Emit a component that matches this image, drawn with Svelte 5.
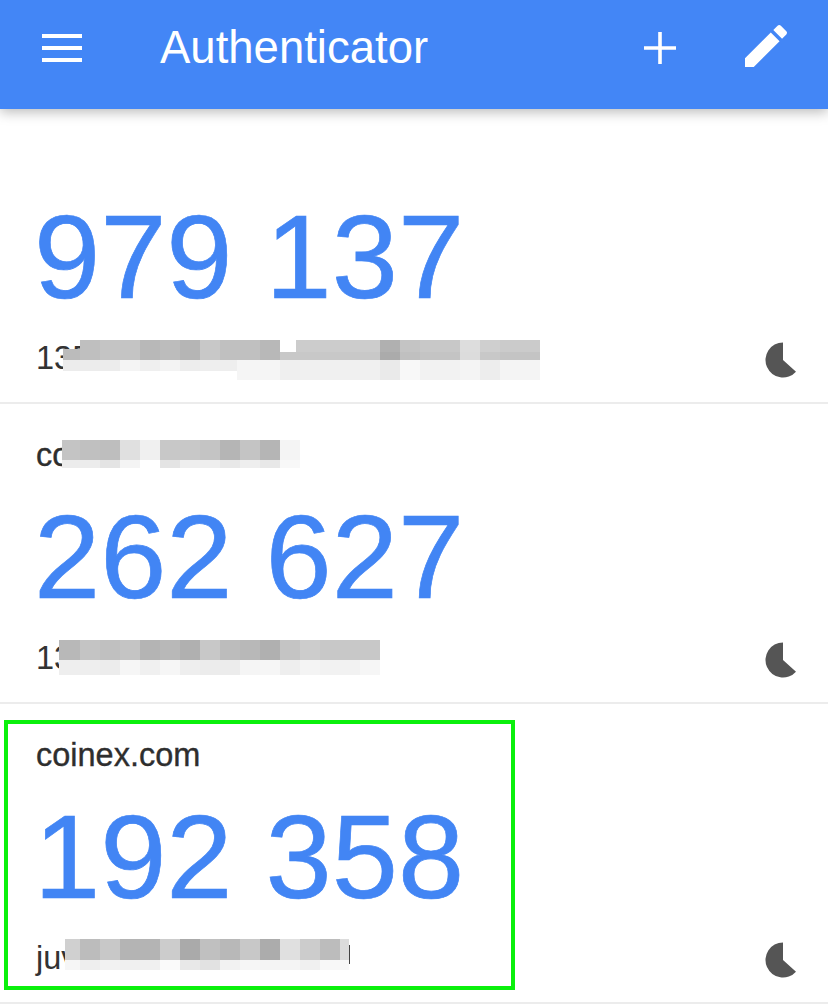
<script>
  const accounts = [
    { issuer: "", code: "979 137", label: "135" },
    { issuer: "co", code: "262 627", label: "13" },
    { issuer: "coinex.com", code: "192 358", label: "juv" }
  ];

  // blurred-out strips over the private text: x, y, height, then [width, grey] cells
  const even = (start, list) => list.map((g, i) => [i === 0 ? start : 20, g]);
  const strips = [
    { x: 63, y: 349, h: 11, cells: [[17, 0xbb]] },
    { x: 80, y: 340, h: 20, cells: even(20, [0xbf, 0xc4, 0xc4, 0xb8, 0xbc, 0xb5, 0xc8, 0xc0, 0xc0, 0xb8]) },
    { x: 296, y: 340, h: 12, cells: [[84, 0xcc], [20, 0xb0], [20, 0xc4], [40, 0xc8], [20, 0xdd], [20, 0xcf], [40, 0xcb]] },
    { x: 280, y: 352, h: 8, cells: [[100, 0xc8], [20, 0xab], [20, 0xc0], [40, 0xc4], [20, 0xdc], [20, 0xc8], [40, 0xc4]] },
    { x: 63, y: 360, h: 11, cells: [[17, 0xec], [20, 0xec], [20, 0xec], [20, 0xf4], [20, 0xef], [20, 0xf3], [20, 0xed], [37, 0xee]] },
    { x: 237, y: 360, h: 20, cells: [[43, 0xf5], [20, 0xef], [80, 0xf0], [20, 0xea], [20, 0xf8], [40, 0xf2], [20, 0xf4], [20, 0xed], [40, 0xf4]] },
    { x: 62, y: 440, h: 20, cells: [[18, 0xc4], [20, 0xc0], [20, 0xbe], [20, 0xe0], [20, 0xf0], [20, 0xc8], [20, 0xc8], [20, 0xc4], [20, 0xb5], [20, 0xc4], [20, 0xb5], [20, 0xf4]] },
    { x: 62, y: 460, h: 8, cells: [[18, 0xec], [20, 0xec], [20, 0xe4], [20, 0xf4], [20, 0xff], [20, 0xe4], [20, 0xee], [20, 0xee], [20, 0xe8], [20, 0xee], [20, 0xe8], [20, 0xf8]] },
    { x: 59, y: 640, h: 20, cells: even(21, [0xb8, 0xc4, 0xc0, 0xc4, 0xb4, 0xb8, 0xb0, 0xc8, 0xbc, 0xb8, 0xb0, 0xc4, 0xcc, 0xc8, 0xc8, 0xc8]) },
    { x: 59, y: 660, h: 15, cells: even(21, [0xee, 0xee, 0xec, 0xf6, 0xf0, 0xf6, 0xee, 0xec, 0xec, 0xf5, 0xf6, 0xee, 0xf4, 0xf2, 0xf2, 0xf6]) },
    { x: 65, y: 939, h: 21, cells: [[15, 0xd0], [20, 0xbc], [20, 0xc8], [40, 0xb4], [20, 0xcc], [20, 0xaa], [20, 0xc0], [20, 0xb8], [20, 0xc8], [20, 0xac], [20, 0xe0], [20, 0xcc], [20, 0xbc], [9, 0xdc]] },
    { x: 65, y: 960, h: 10, cells: [[15, 0xf6], [20, 0xee], [20, 0xf2], [40, 0xf0], [20, 0xfa], [20, 0xe8], [20, 0xe2], [20, 0xf2], [20, 0xf6], [20, 0xf4], [20, 0xf4], [20, 0xf0], [20, 0xf8], [9, 0xf8]] },
    // last stroke of the address that sticks out past the blur
    { x: 349, y: 945, h: 19, cells: [[1, 0x44]] }
  ];
</script>

<div class="page">
  <header class="appbar">
    <button class="menu" aria-label="Menu">
      <span></span><span></span><span></span>
    </button>
    <h1>Authenticator</h1>
    <svg class="plus" viewBox="0 0 32 32" aria-hidden="true">
      <path d="M14.2 0h3.6v14.2H32v3.6H17.8V32h-3.6V17.8H0v-3.6h14.2z" />
    </svg>
    <svg class="pencil" viewBox="0 0 24 24" aria-hidden="true">
      <path d="M3 17.25V21h3.75L17.81 9.94l-3.75-3.75L3 17.25zM20.71 7.04c.39-.39.39-1.02 0-1.41l-2.34-2.34c-.39-.39-1.02-.39-1.41 0l-1.83 1.83 3.75 3.75 1.83-1.83z" />
    </svg>
  </header>

  <main class="list">
    {#each accounts as account}
      <section class="row" class:bare={!account.issuer}>
        <div class="issuer">{account.issuer}</div>
        <div class="code">{account.code}</div>
        <div class="foot">
          <span class="label">{account.label}</span>
          <svg class="timer" viewBox="0 0 36 36" aria-hidden="true">
            <path d="M18 18V0.5A17.5 17.5 0 1 0 31 29.7z" />
          </svg>
        </div>
      </section>
    {/each}
  </main>

  {#each strips as s}
    <div class="strip" style="left:{s.x}px;top:{s.y}px;height:{s.h}px">
      {#each s.cells as [w, g]}
        <i style="width:{w}px;background:rgb({g},{g},{g})"></i>
      {/each}
    </div>
  {/each}

  <div class="highlight"></div>
</div>

<style>
  :global(body) {
    margin: 0;
    background: #fff;
  }

  .page {
    position: relative;
    width: 828px;
    height: 1006px;
    overflow: hidden;
    font-family: "Liberation Sans", Arial, sans-serif;
  }

  .appbar {
    position: relative;
    z-index: 1;
    display: flex;
    align-items: center;
    height: 109px;
    padding: 0 41px 13px 42px;
    box-sizing: border-box;
    background: #4386f6;
    box-shadow: 0 3px 12px rgba(0, 0, 0, 0.28);
    color: #fff;
  }

  .menu {
    display: flex;
    flex-direction: column;
    gap: 8px;
    width: 40px;
    padding: 0;
    border: none;
    background: none;
  }

  .menu span {
    display: block;
    height: 4px;
    background: #fff;
  }

  h1 {
    flex: 1;
    margin: 0 0 0 78px;
    font-size: 45.5px;
    font-weight: 400;
    line-height: 1;
  }

  .plus {
    width: 32px;
    height: 32px;
    margin-right: 62px;
    fill: #fff;
  }

  .pencil {
    width: 56px;
    height: 56px;
    margin: -4px -7px 0 0;
    fill: #fff;
  }

  .row {
    height: 300px;
    box-sizing: border-box;
    padding: 32px 27px 0 36px;
    border-bottom: 2px solid #ececec;
  }

  .row.bare {
    height: 295px;
    padding-top: 27px;
  }

  .issuer {
    height: 38px;
    font-size: 32.5px;
    line-height: 38px;
    color: #2e2e2e;
    -webkit-text-stroke: 0.35px #2e2e2e;
  }

  .code {
    height: 130px;
    margin: 18px 0 0 -2px;
    font-size: 119px;
    line-height: 130px;
    color: #4285f4;
    -webkit-text-stroke: 0.7px #4285f4;
  }

  .foot {
    display: flex;
    align-items: center;
    justify-content: space-between;
    height: 40px;
    margin-top: 16px;
  }

  .label {
    font-size: 32.5px;
    color: #333;
  }

  .timer {
    width: 36px;
    height: 36px;
    margin-top: 4px;
    fill: #555;
  }

  .strip {
    position: absolute;
    display: flex;
    z-index: 2;
  }

  .strip i {
    display: block;
    flex: none;
    height: 100%;
  }

  .highlight {
    position: absolute;
    z-index: 3;
    left: 4px;
    top: 720px;
    width: 503px;
    height: 262px;
    border: 4px solid #0af00c;
  }
</style>
